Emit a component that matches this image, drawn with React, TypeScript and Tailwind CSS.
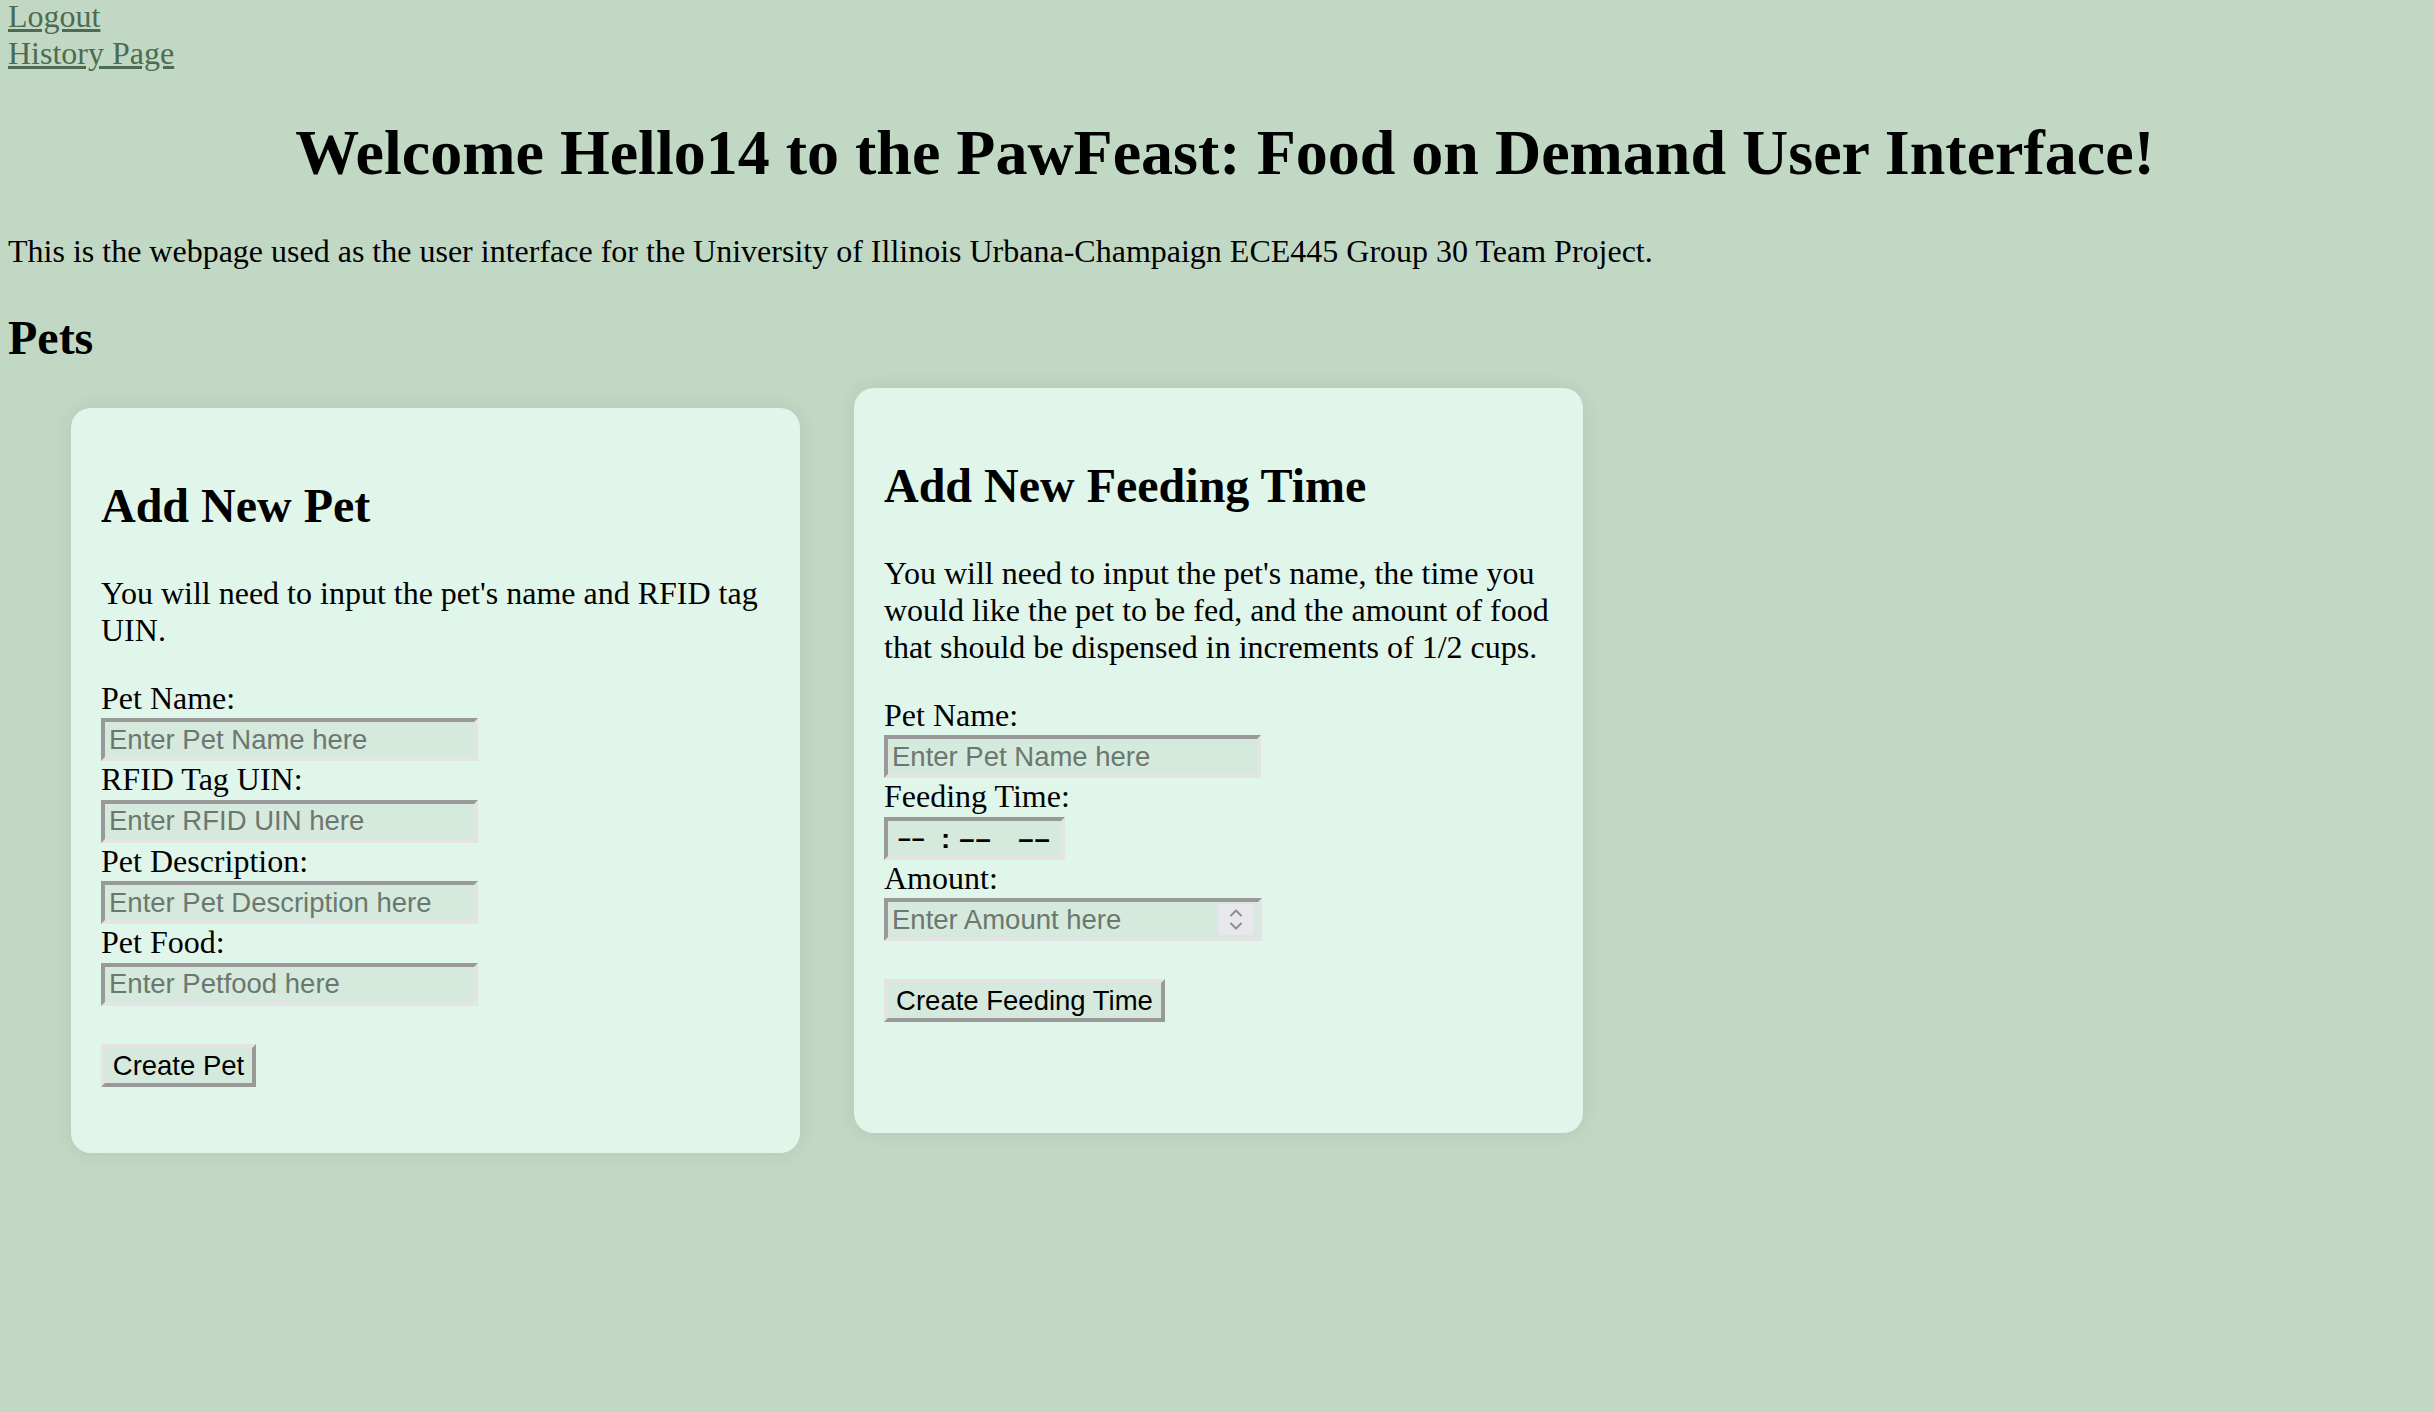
import React from 'react';

const inputBox =
  "box-border h-[43px] border-4 border-t-[#999999] border-l-[#999999] border-r-[#e4e4e4] border-b-[#e4e4e4] bg-[#d5eadc] px-[4px] font-['Liberation_Sans',Arial,sans-serif] text-[27.5px] text-black outline-none placeholder:text-[#6b7770]";

const buttonBox =
  "mt-[38px] box-border flex h-[43px] items-center justify-center border-4 border-t-[#e4e4e4] border-l-[#e4e4e4] border-r-[#999999] border-b-[#999999] bg-[#d5eadc] font-['Liberation_Sans',Arial,sans-serif] text-[27.5px] text-black";

type FieldProps = {
  label: string;
  placeholder: string;
  first?: boolean;
};

const Field = ({ label, placeholder, first }: FieldProps) => (
  <>
    <label className={first ? 'mt-[31px] block leading-[37px]' : 'block leading-[37px]'}>{label}</label>
    <input type="text" placeholder={placeholder} className={`mt-[1.5px] block w-[377px] ${inputBox}`} />
  </>
);

const Chevron = ({ up }: { up?: boolean }) => (
  <svg width="14" height="9" viewBox="0 0 14 9" fill="none">
    <path
      d={up ? 'M2 7.5 L7 2.5 L12 7.5' : 'M2 1.5 L7 6.5 L12 1.5'}
      stroke="#8e8e93"
      strokeWidth="2"
      strokeLinecap="round"
      strokeLinejoin="round"
    />
  </svg>
);

const Card = ({ lifted, children }: { lifted?: boolean; children: React.ReactNode }) => (
  <div
    className={
      lifted
        ? 'box-border w-[729px] -translate-y-[20px] rounded-[20px] bg-[#e1f6eb] pt-[30px] pr-[26px] pb-[66px] pl-[30px] shadow-[0_0_20px_rgba(0,0,0,0.08)]'
        : 'box-border w-[729px] rounded-[20px] bg-[#e1f6eb] pt-[30px] pr-[26px] pb-[66px] pl-[30px] shadow-[0_0_20px_rgba(0,0,0,0.08)]'
    }
  >
    {children}
  </div>
);

export default function App() {
  return (
    <div className="flex min-h-screen flex-col bg-[#c1d9c4] px-[8px] font-['Liberation_Serif','Times_New_Roman',serif] text-[32px] leading-[37px] text-black">
      {/* top links */}
      <nav className="-mt-[2px] flex flex-col items-start">
        <a href="#" className="text-[#4d6b52] underline">
          Logout
        </a>
        <a href="#" className="text-[#4d6b52] underline">
          History Page
        </a>
      </nav>

      <h1 className="mt-[44px] pl-[16px] text-center text-[64px] font-bold leading-[73.5px]">
        Welcome Hello14 to the PawFeast: Food on Demand User Interface!
      </h1>

      <p className="mt-[43px]">
        This is the webpage used as the user interface for the University of Illinois Urbana-Champaign ECE445 Group 30
        Team Project.
      </p>

      <h2 className="mt-[40px] text-[48px] font-bold leading-[55px]">Pets</h2>

      <div className="mt-[43px] ml-[63px] flex items-stretch gap-[54px]">
        {/* Add pet */}
        <Card>
          <h3 className="mt-[40px] text-[48px] font-bold leading-[55px]">Add New Pet</h3>
          <p className="mt-[42px]">You will need to input the pet's name and RFID tag UIN.</p>
          <form onSubmit={(e) => e.preventDefault()}>
            <Field first label="Pet Name:" placeholder="Enter Pet Name here" />
            <Field label="RFID Tag UIN:" placeholder="Enter RFID UIN here" />
            <Field label="Pet Description:" placeholder="Enter Pet Description here" />
            <Field label="Pet Food:" placeholder="Enter Petfood here" />
            <button type="submit" className={`w-[155px] ${buttonBox}`}>
              Create Pet
            </button>
          </form>
        </Card>

        {/* Add feeding time */}
        <Card lifted>
          <h3 className="mt-[40px] text-[48px] font-bold leading-[55px]">Add New Feeding Time</h3>
          <p className="mt-[42px]">
            You will need to input the pet's name, the time you would like the pet to be fed, and the amount of food that
            should be dispensed in increments of 1/2 cups.
          </p>
          <form onSubmit={(e) => e.preventDefault()}>
            <Field first label="Pet Name:" placeholder="Enter Pet Name here" />

            <label className="block leading-[37px]">Feeding Time:</label>
            <div className={`mt-[1.5px] flex w-[181px] items-center pl-[10px] font-bold ${inputBox}`}>
              <span className="w-[25px] text-[23px] tracking-[1px]">––</span>
              <span className="ml-[18px]">:</span>
              <span className="ml-[9px] w-[32px] tracking-[1px]">––</span>
              <span className="ml-[27px] w-[32px] tracking-[1px]">––</span>
            </div>

            <label className="block leading-[37px]">Amount:</label>
            <div className={`mt-[1.5px] flex w-[378px] items-stretch py-[2px] pr-[4px] pl-0 ${inputBox}`}>
              <input
                type="text"
                placeholder="Enter Amount here"
                className="min-w-0 flex-1 bg-transparent pl-[4px] text-[27.5px] outline-none placeholder:text-[#6b7770]"
              />
              <div className="flex w-[36px] flex-col items-center justify-center gap-[5px] bg-[#e8e8ec]">
                <Chevron up />
                <Chevron />
              </div>
            </div>

            <button type="submit" className={`w-[281px] ${buttonBox}`}>
              Create Feeding Time
            </button>
          </form>
        </Card>
      </div>
    </div>
  );
}
